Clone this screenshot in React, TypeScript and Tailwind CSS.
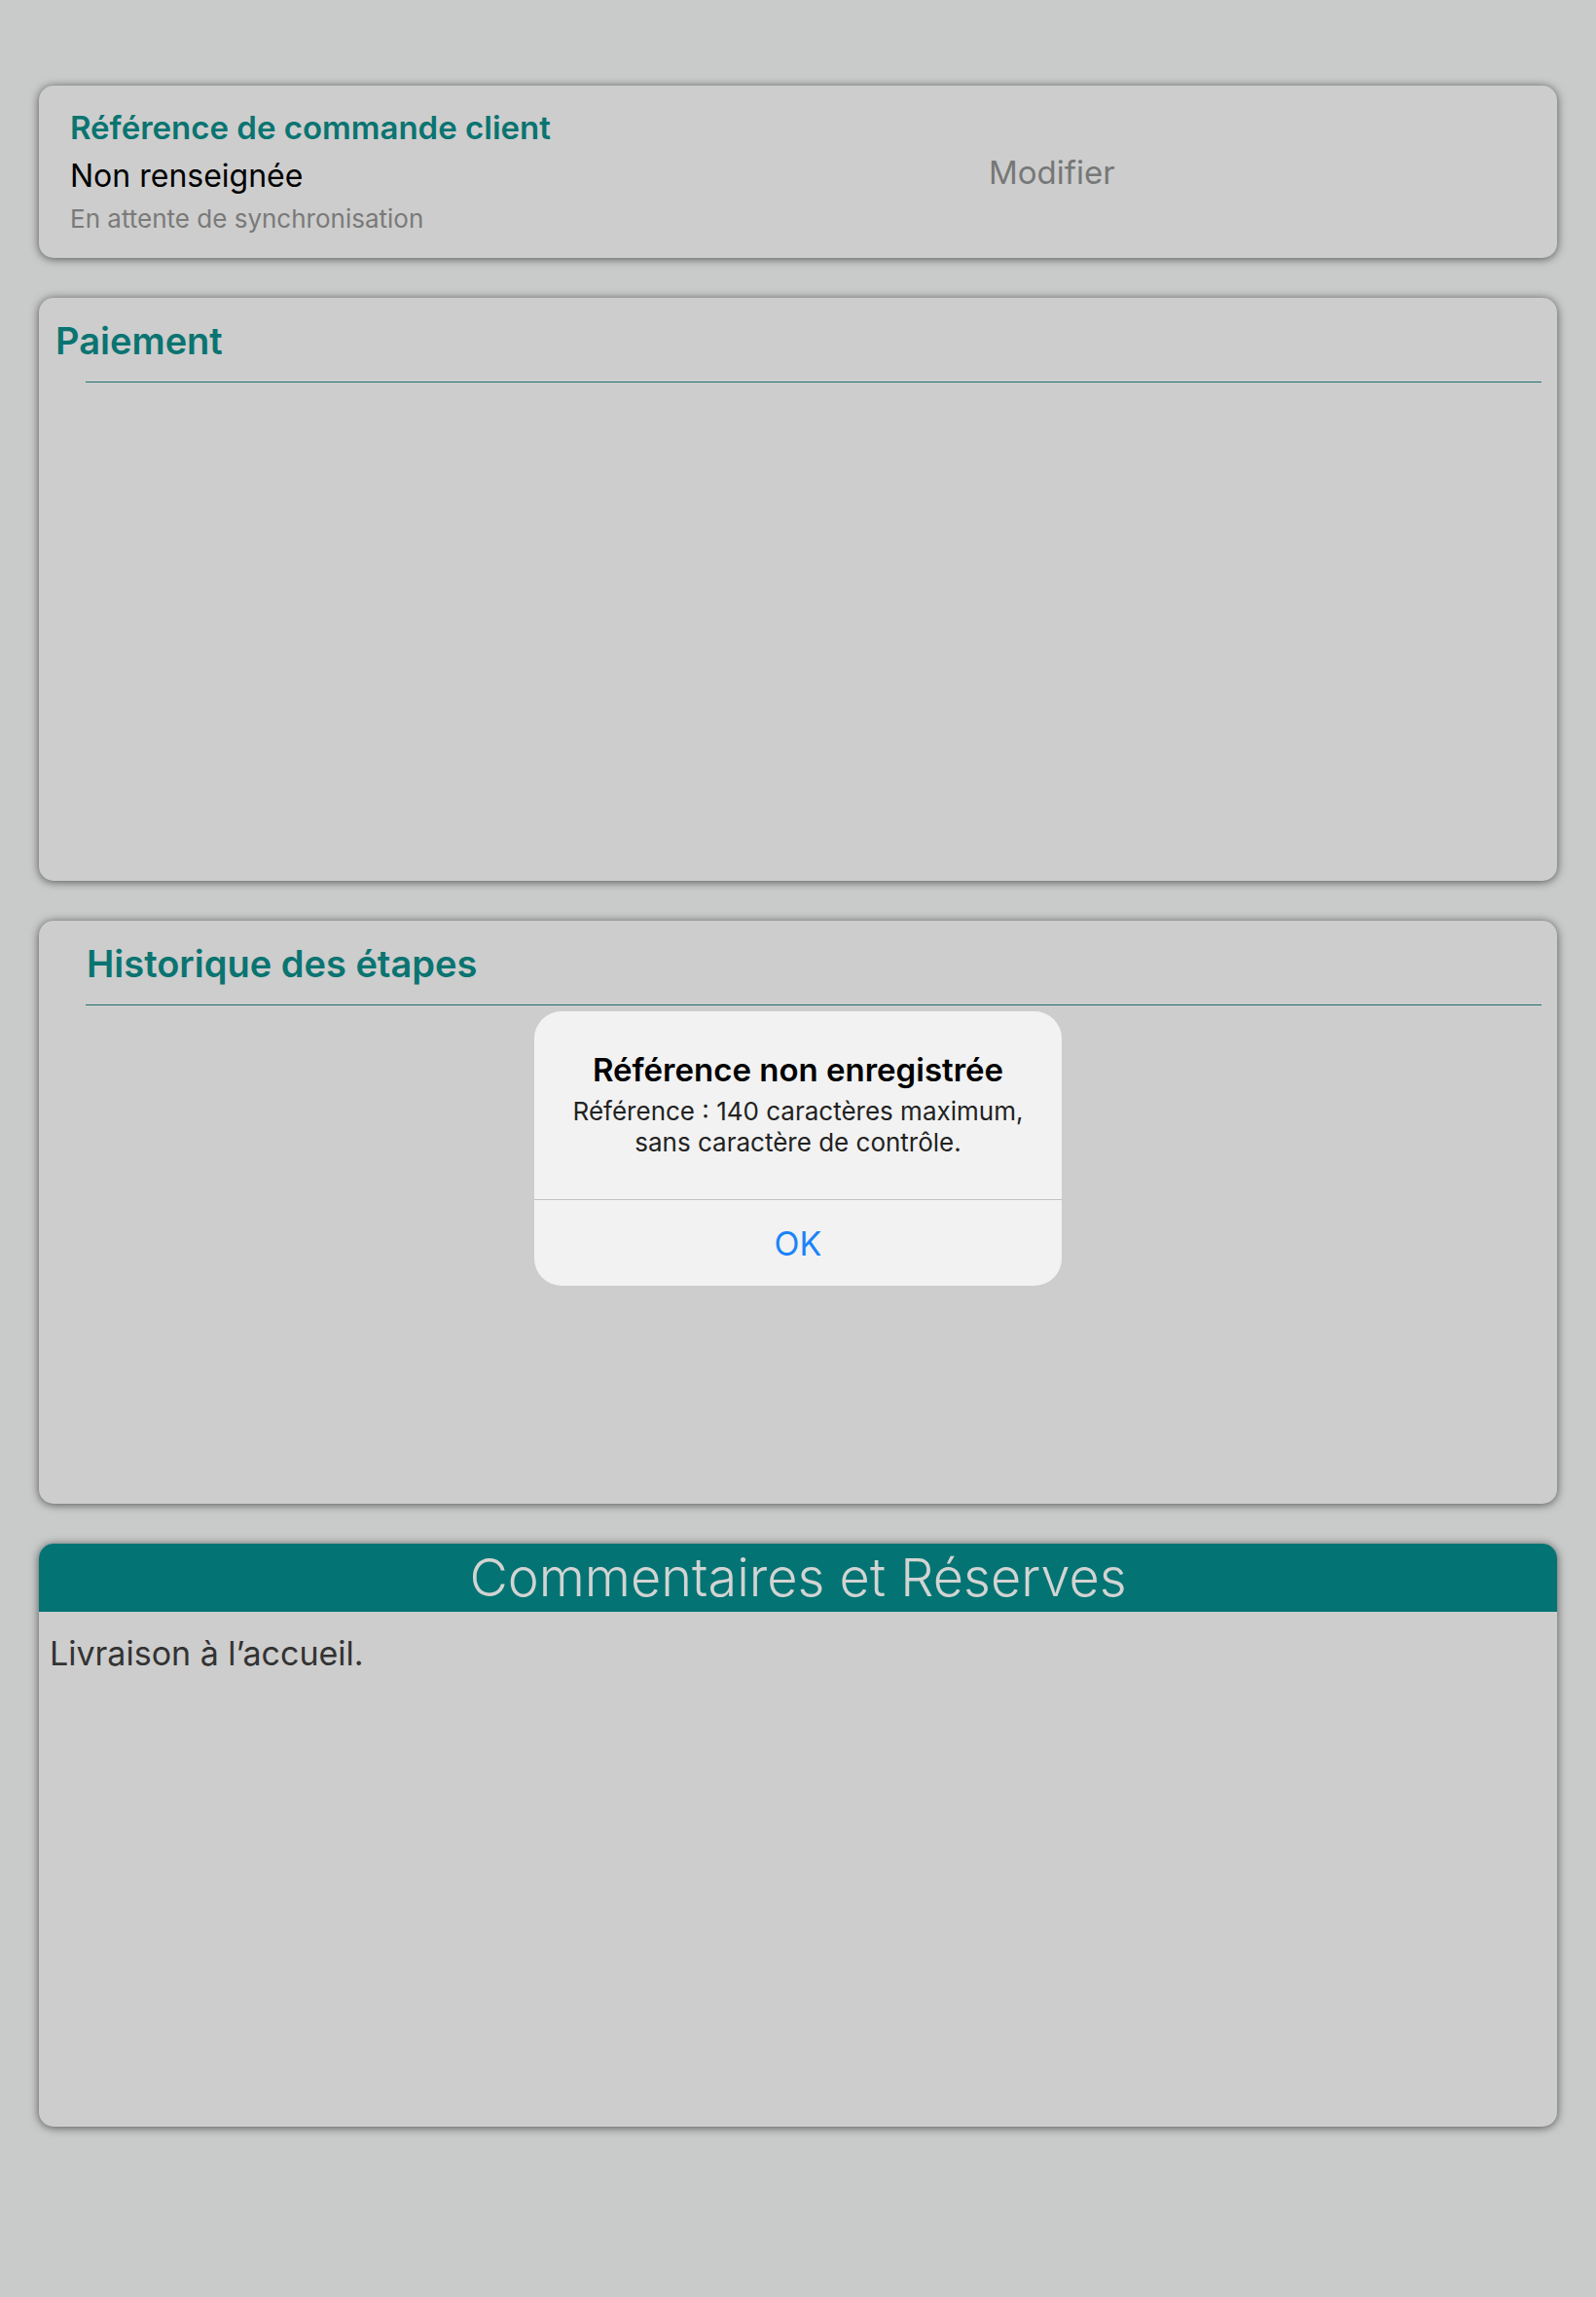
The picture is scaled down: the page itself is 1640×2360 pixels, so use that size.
import React from "react";

const font = { fontFamily: "Inter, 'Noto Sans', 'Liberation Sans', sans-serif" };

function Card({ children, className = "" }: { children: React.ReactNode; className?: string }) {
  return (
    <div
      className={`rounded-[15px] bg-[#cdcdcd] shadow-[0_1px_10px_rgba(0,0,0,0.6)] ${className}`}
    >
      {children}
    </div>
  );
}

function SectionCard({ title, padLeft }: { title: string; padLeft: string }) {
  return (
    <Card className="h-[599px] pt-[21px] pr-[16px]">
      <h2 className={`${padLeft} text-[38px] leading-[46px] font-semibold text-[#0a7471]`}>{title}</h2>
      <div className="ml-[48px] mt-[19px] h-px bg-[#1f6f6c]" />
    </Card>
  );
}

export default function App() {
  return (
    <div style={font} className="relative min-h-screen w-full bg-[#c9cbca] px-[40px] pt-[88px] pb-[175px]">
      <div className="flex flex-col gap-[41px]">
        {/* Référence client */}
        <Card className="flex h-[177px] items-center">
          <div className="w-[976px] pl-[32px] pb-[2px]">
            <div className="text-[33px] leading-[40px] font-semibold text-[#0a7471]">
              Référence de commande client
            </div>
            <div className="mt-[10px] text-[32px] leading-[40px] text-black">Non renseignée</div>
            <div className="mt-[8px] text-[26px] leading-[32px] text-[#7a7a7a]">
              En attente de synchronisation
            </div>
          </div>
          <button className="text-[33px] leading-[40px] text-[#767877]">Modifier</button>
        </Card>

        <SectionCard title="Paiement" padLeft="pl-[17px]" />
        <SectionCard title="Historique des étapes" padLeft="pl-[49px]" />

        {/* Commentaires */}
        <Card className="h-[599px] overflow-hidden">
          <div className="flex h-[70px] items-center justify-center bg-[#037473]">
            <span className="text-[54px] leading-none font-light text-[#d2d4d3]">
              Commentaires et Réserves
            </span>
          </div>
          <p className="pl-[11px] pt-[22px] text-[34px] leading-[42px] text-[#333333]">
            Livraison à l’accueil.
          </p>
        </Card>
      </div>

      {/* Alert */}
      <div className="absolute inset-x-0 top-0 flex h-[2360px] items-center justify-center">
        <div className="w-[542px] overflow-hidden rounded-[28px] bg-[#f2f2f2]">
          <div className="flex h-[193px] flex-col items-center px-[30px] pt-[40px] text-center">
            <div className="text-[33px] leading-[41px] font-semibold text-black">
              Référence non enregistrée
            </div>
            <div className="mt-[6px] text-[26px] leading-[32px] text-[#222222]">
              Référence : 140 caractères maximum,
              <br />
              sans caractère de contrôle.
            </div>
          </div>
          <div className="h-px bg-[#c2c2c2]" />
          <div className="flex h-[88px] items-center justify-center text-[34px] text-[#1a84f8]">OK</div>
        </div>
      </div>
    </div>
  );
}
